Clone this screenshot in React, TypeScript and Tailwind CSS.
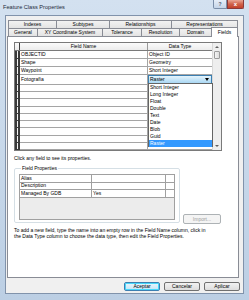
import React from "react";

const rows1 = [
  { label: "Indexes", w: 49 },
  { label: "Subtypes", w: 53 },
  { label: "Relationships", w: 62 },
  { label: "Representations", w: 66 },
];
const rows2 = [
  { label: "General", w: 30 },
  { label: "XY Coordinate System", w: 65 },
  { label: "Tolerance", w: 39 },
  { label: "Resolution", w: 38 },
  { label: "Domain", w: 32 },
];

const fields: [string, string][] = [
  ["OBJECTID", "Object ID"],
  ["Shape", "Geometry"],
  ["Waypoint", "Short Integer"],
  ["Fotografía", "__combo__"],
  ["", ""],
  ["", ""],
  ["", ""],
  ["", ""],
  ["", ""],
  ["", ""],
  ["", ""],
  ["", ""],
  ["", ""],
];

const types = ["Short Integer", "Long Integer", "Float", "Double", "Text", "Date", "Blob", "Guid", "Raster"];

export default function App() {
  return (
    <div className="w-[249px] h-[300px] bg-gradient-to-b from-[#d3e1f0] to-[#bccfe4] flex flex-col overflow-hidden font-['Liberation_Sans',Arial,sans-serif] text-[5px] leading-[7px] text-black">
      {/* title bar */}
      <div className="h-[15px] flex items-start shrink-0">
        <span className="ml-[3px] mt-[4px] text-[5.6px] leading-[7px] text-[#1e2a3a]">Feature Class Properties</span>
        <div className="ml-auto mr-[5px] flex">
          <div className="w-[14px] h-[9px] border border-[#7b8ea8] border-t-0 rounded-bl-[2px] bg-gradient-to-b from-[#e6eef8] to-[#c5d5e8] flex items-center justify-center text-[5px] text-[#4a5a70] font-bold">?</div>
          <div className="w-[17px] h-[9px] border border-[#8a3a3a] border-t-0 rounded-br-[2px] bg-gradient-to-b from-[#e8a595] via-[#d0634c] to-[#c2402a] flex items-center justify-center text-[6px] text-white font-bold">x</div>
        </div>
      </div>
      {/* client */}
      <div className="mx-[5px] h-[279px] shrink-0 bg-[#f0f0f0] border border-[#8193ab] flex flex-col">
        {/* tabs */}
        <div className="pt-[4px] pl-[2px]">
          <div className="flex h-[8px]">
            {rows1.map((t, i) => (
              <div
                key={t.label}
                style={{ width: t.w }}
                className={`h-[8px] border-t border-r border-[#898c95] bg-gradient-to-b from-[#f2f2f2] to-[#e3e3e3] flex items-center justify-center ${i === 0 ? "border-l" : ""}`}
              >
                {t.label}
              </div>
            ))}
          </div>
          <div className="flex h-[8px] items-end">
            {rows2.map((t, i) => (
              <div
                key={t.label}
                style={{ width: t.w }}
                className={`h-[8px] border-t border-r border-[#898c95] bg-gradient-to-b from-[#f2f2f2] to-[#e3e3e3] flex items-center justify-center ${i === 0 ? "border-l" : ""}`}
              >
                {t.label}
              </div>
            ))}
            <div className="w-[27px] h-[10px] -mb-[1px] -ml-[1px] relative z-10 bg-white border border-b-0 border-[#898c95] flex items-start justify-center pt-[1px]">
              Fields
            </div>
          </div>
        </div>
        {/* panel */}
        <div className="ml-[1px] w-[232px] h-[242px] bg-white border border-[#898c95] pl-[6px] pt-[5px] flex flex-col">
          {/* grid */}
          <div className="relative w-[208px] h-[109px] flex border border-[#7a7a7a]">
            <div className="flex-1 flex flex-col">
              <div className="h-[8px] flex shrink-0 border-b border-[#7a7a7a] bg-gradient-to-b from-[#fbfbfb] to-[#ececec]">
                <div className="w-[5px] border-r border-[#404040]" />
                <div className="w-[128px] border-r border-[#9a9a9a] text-center">Field Name</div>
                <div className="flex-1 text-center">Data Type</div>
              </div>
              <div className="flex-1 flex flex-col">
                {fields.map(([n, t], i) => (
                  <div key={i} className="flex-1 basis-0 flex">
                    <div className="w-[5px] bg-[#f4f4f4] border-l-2 border-r-2 border-b border-[#3a3a3a]" />
                    <div className="w-[128px] border-r border-b border-[#a5a5a5] pl-[1px] flex items-center">{n}</div>
                    <div className="flex-1 border-b border-[#a5a5a5] flex items-center">
                      {t === "__combo__" ? (
                        <div className="w-full h-full border border-[#3c7fb1] bg-gradient-to-b from-[#e5f4fc] to-[#a9d7f3] flex items-center pl-[1px]">
                          <span className="flex-1">Raster</span>
                          <svg width="4" height="3" viewBox="0 0 4 3" className="mr-[2px]">
                            <path d="M0 0h4L2 3z" fill="#000" />
                          </svg>
                        </div>
                      ) : (
                        <span className="pl-[1px]">{t}</span>
                      )}
                    </div>
                  </div>
                ))}
              </div>
            </div>
            {/* scrollbar */}
            <div className="w-[9px] bg-[#eeeeee] border-l border-[#d8d8d8] flex flex-col">
              <div className="h-[8px] flex items-center justify-center">
                <svg width="4" height="2" viewBox="0 0 4 2"><path d="M0 2h4L2 0z" fill="#606060" /></svg>
              </div>
              <div className="h-[8px] mx-[1px] border border-[#9b9b9b] rounded-[1px] bg-gradient-to-r from-[#f5f5f5] to-[#dcdcdc]" />
              <div className="flex-1" />
              <div className="h-[8px] flex items-center justify-center">
                <svg width="4" height="2" viewBox="0 0 4 2"><path d="M0 0h4L2 2z" fill="#606060" /></svg>
              </div>
            </div>
            {/* dropdown list */}
            <div className="absolute left-[133px] top-[40px] w-[65px] h-[64px] bg-white border border-[#646464] flex flex-col z-10">
              {types.map((t) => (
                <div
                  key={t}
                  className={`flex-1 basis-0 flex items-center pl-[1px] ${t === "Raster" ? "bg-[#3399ff] text-white" : ""}`}
                >
                  {t}
                </div>
              ))}
            </div>
          </div>
          <div className="mt-[4px] h-[7px]">Click any field to see its properties.</div>
          {/* field properties */}
          <div className="mt-[3px] flex items-end">
            <fieldset className="w-[166px] border border-[#d5dfe5] rounded-[2px] px-[4px] pb-[2px]">
              <legend className="ml-[2px] px-[1px] leading-[7px]">Field Properties</legend>
              <div className="mt-[2px] h-[46px] bg-[#ececec] border border-[#a0a0a0] flex flex-col">
                {[
                  ["Alias", ""],
                  ["Description", ""],
                  ["Managed By GDB", "Yes"],
                ].map(([a, b]) => (
                  <div key={a} className="h-[7.5px] flex bg-white border-b border-[#a0a0a0]">
                    <div className="w-[72px] border-r border-[#a0a0a0] pl-[1px] flex items-center">{a}</div>
                    <div className="w-[74px] border-r border-[#a0a0a0] pl-[1px] flex items-center">{b}</div>
                    <div className="flex-1" />
                  </div>
                ))}
              </div>
            </fieldset>
            <div className="ml-[3px] -mb-[1px] w-[38px] h-[10px] border border-[#adb2b5] rounded-[2px] bg-[#f4f4f4] text-[#a0a0a0] flex items-center justify-center">
              Import...
            </div>
          </div>
          <div className="mt-[5px] leading-[5.8px] whitespace-nowrap">
            To add a new field, type the name into an empty row in the Field Name column, click in
            <br />
            the Data Type column to choose the data type, then edit the Field Properties.
          </div>
        </div>
        {/* buttons */}
        <div className="mt-[4px] flex justify-end gap-[4px] pr-[3px]">
          <div className="w-[36px] h-[9px] rounded-[2px] border border-[#3c7fb1] bg-gradient-to-b from-[#eaf6fd] to-[#c4e5f6] shadow-[inset_0_0_0_1px_#48d8fb] flex items-center justify-center">Aceptar</div>
          <div className="w-[36px] h-[9px] rounded-[2px] border border-[#707070] bg-gradient-to-b from-[#f2f2f2] to-[#dddddd] flex items-center justify-center">Cancelar</div>
          <div className="w-[36px] h-[9px] rounded-[2px] border border-[#707070] bg-gradient-to-b from-[#f2f2f2] to-[#dddddd] flex items-center justify-center">Aplicar</div>
        </div>
      </div>
    </div>
  );
}
